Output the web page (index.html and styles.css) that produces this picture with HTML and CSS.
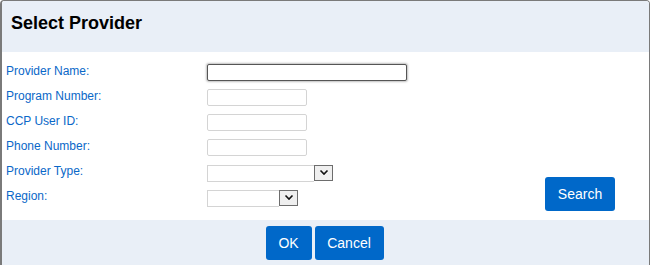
FILE: index.html
```html
<!DOCTYPE html>
<html>
<head>
<meta charset="utf-8">
<title>Select Provider</title>
<link rel="stylesheet" href="styles.css">
</head>
<body>
<div class="dialog">
  <div class="header"><h1 class="title">Select Provider</h1></div>
  <div class="body">
    <div class="form">
      <div class="row"><label class="label">Provider Name:</label><span class="input input-wide input-focus"></span></div>
      <div class="row"><label class="label">Program Number:</label><span class="input"></span></div>
      <div class="row"><label class="label">CCP User ID:</label><span class="input"></span></div>
      <div class="row"><label class="label">Phone Number:</label><span class="input"></span></div>
      <div class="row"><label class="label">Provider Type:</label>
        <span class="select select-type"><span class="select-value"></span><span class="arrow"><svg width="10" height="7" viewBox="0 0 10 7"><path d="M1.5 1.5 L5 5 L8.5 1.5" fill="none" stroke="#111" stroke-width="1.6"/></svg></span></span></div>
      <div class="row"><label class="label">Region:</label>
        <span class="select select-region"><span class="select-value"></span><span class="arrow"><svg width="10" height="7" viewBox="0 0 10 7"><path d="M1.5 1.5 L5 5 L8.5 1.5" fill="none" stroke="#111" stroke-width="1.6"/></svg></span></span></div>
    </div>
    <button class="btn btn-search">Search</button>
  </div>
  <div class="footer">
    <button class="btn btn-ok">OK</button>
    <button class="btn btn-cancel">Cancel</button>
  </div>
</div>
</body>
</html>
```

FILE: styles.css
```css
html, body {
  margin: 0;
  padding: 0;
  background: #ffffff;
}
body {
  font-family: "Liberation Sans", Arial, sans-serif;
  width: 650px;
  height: 265px;
  overflow: hidden;
}
.dialog {
  box-sizing: border-box;
  width: 650px;
  height: 275px;
  border: 1px solid #7a7a7a;
  border-left: 2px solid #7a7a7a;
  border-radius: 4px 4px 0 0;
  overflow: hidden;
}
.header {
  background: #e9eff7;
  height: 51px;
  box-sizing: border-box;
  padding: 12px 0 0 9px;
}
.title {
  margin: 0;
  font-size: 18px;
  line-height: 20px;
  font-weight: bold;
  color: #000;
}
.body {
  background: #fff;
  height: 168px;
  box-sizing: border-box;
  padding: 8px 34px 9px 4px;
  display: flex;
  justify-content: space-between;
  align-items: flex-end;
}
.form {
  display: flex;
  flex-direction: column;
  align-self: flex-start;
}
.row {
  display: flex;
  align-items: center;
  height: 25px;
}
.label {
  width: 201px;
  font-size: 12px;
  line-height: 14px;
  padding-bottom: 3px;
  color: #0a68c8;
}
.input {
  display: block;
  box-sizing: border-box;
  width: 100px;
  height: 17px;
  border: 1px solid #d4d4d4;
  border-radius: 2px;
  background: #fff;
}
.input-wide {
  width: 200px;
}
.input-focus {
  border: 1px solid #555;
  box-shadow: 0 0 2px 1px rgba(0, 0, 0, 0.25);
}
.select {
  display: flex;
  box-sizing: border-box;
  height: 17px;
  margin-top: 1px;
}
.select-value {
  flex: 1;
  border: 1px solid #d4d4d4;
  border-right: none;
  background: #fff;
}
.select-type { width: 126px; }
.select-region { width: 91px; }
.arrow {
  box-sizing: border-box;
  width: 19px;
  height: 16px;
  border: 1px solid #6d6d6d;
  background: #efefef;
  display: flex;
  align-items: center;
  justify-content: center;
}
.arrow svg { display: block; }
.btn {
  font-family: "Liberation Sans", Arial, sans-serif;
  font-size: 14px;
  color: #fff;
  background: #0068c9;
  border: none;
  border-radius: 3px;
  padding: 0;
  height: 34px;
  cursor: pointer;
}
.btn-search {
  width: 70px;
}
.footer {
  background: #e9eff7;
  height: 60px;
  padding: 6px 2px 0 0;
  box-sizing: border-box;
  display: flex;
  justify-content: center;
  gap: 3px;
}
.btn-ok { width: 46px; }
.btn-cancel { width: 69px; }
```
